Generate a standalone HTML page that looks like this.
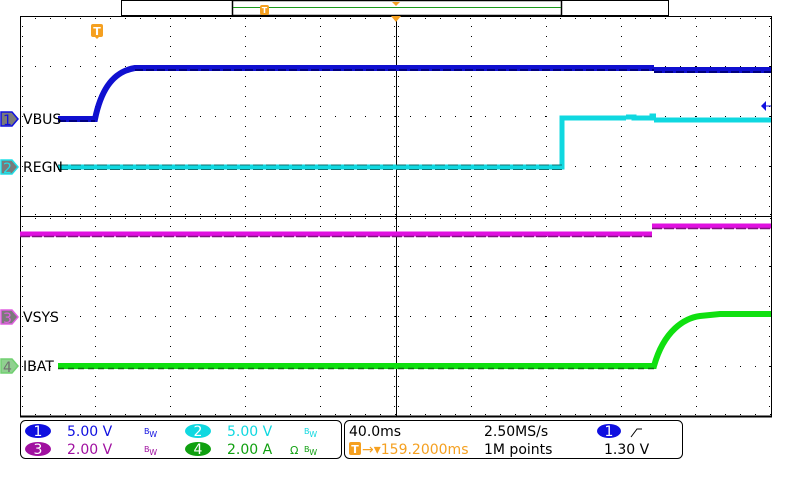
<!DOCTYPE html>
<html><head><style>
body{margin:0;width:800px;height:480px;background:#fff;overflow:hidden}
svg{display:block}
text{font-family:"DejaVu Sans","Liberation Sans",sans-serif}
</style></head><body>
<svg width="800" height="480" viewBox="0 0 800 480" xmlns="http://www.w3.org/2000/svg">
<!-- top bar -->
<rect x="121.5" y="0.5" width="547" height="15" fill="#fff" stroke="#000"/>
<rect x="232.5" y="0.5" width="329" height="15" fill="#fff" stroke="#000" stroke-width="1.5"/>
<line x1="233" y1="7.5" x2="561" y2="7.5" stroke="#1a9a1a"/>
<rect x="260" y="5" width="9" height="10" rx="2" fill="#f5a020"/>
<text x="264.5" y="13" font-size="8" fill="#fff" text-anchor="middle" font-weight="bold">T</text>
<polygon points="392,2 400,2 396,6" fill="#f5a020"/>
<!-- grid frame -->
<rect x="20.5" y="16.5" width="751" height="400" fill="none" stroke="#000"/>
<line x1="20" y1="416.5" x2="772" y2="416.5" stroke="#000" stroke-width="2"/>
<line x1="20" y1="216.5" x2="772" y2="216.5" stroke="#000"/>
<line x1="396.5" y1="16" x2="396.5" y2="416" stroke="#000"/>
<g stroke="#000" stroke-width="1" stroke-dasharray="1 9">
<line x1="95.5" y1="16" x2="95.5" y2="416"/><line x1="170.5" y1="16" x2="170.5" y2="416"/><line x1="245.5" y1="16" x2="245.5" y2="416"/><line x1="320.5" y1="16" x2="320.5" y2="416"/><line x1="471.5" y1="16" x2="471.5" y2="416"/><line x1="546.5" y1="16" x2="546.5" y2="416"/><line x1="621.5" y1="16" x2="621.5" y2="416"/><line x1="696.5" y1="16" x2="696.5" y2="416"/>
</g>
<g stroke="#000" stroke-width="1" stroke-dasharray="1 14">
<line x1="20" y1="66.5" x2="772" y2="66.5"/><line x1="20" y1="116.5" x2="772" y2="116.5"/><line x1="20" y1="166.5" x2="772" y2="166.5"/><line x1="20" y1="266.5" x2="772" y2="266.5"/><line x1="20" y1="316.5" x2="772" y2="316.5"/><line x1="20" y1="366.5" x2="772" y2="366.5"/>
</g>
<g stroke="#000" stroke-dasharray="1 9">
<line x1="22.5" y1="16" x2="22.5" y2="416"/><line x1="769.5" y1="16" x2="769.5" y2="416"/><line x1="394.5" y1="16" x2="394.5" y2="416"/><line x1="398.5" y1="16" x2="398.5" y2="416"/>
</g>
<g stroke="#000" stroke-dasharray="1 14">
<line x1="20" y1="18.5" x2="772" y2="18.5"/><line x1="20" y1="414.5" x2="772" y2="414.5"/><line x1="20" y1="214.5" x2="772" y2="214.5"/><line x1="20" y1="218.5" x2="772" y2="218.5"/>
</g>
<!-- trigger markers -->
<polygon points="391,16 401,16 396,22" fill="#f5a020"/>
<rect x="91" y="24" width="12" height="13" rx="2" fill="#f5a020"/>
<polygon points="95,37 99,37 97,39" fill="#f5a020"/>
<text x="97" y="35" font-size="11" fill="#fff" text-anchor="middle" font-weight="bold">T</text>
<!-- traces -->
<path d="M58,119 H95 C100,95 110,72 135,68 H654 M654,70 H771" fill="none" stroke="#1010d0" stroke-width="6"/>
<path d="M58,121 H95 M135,70 H654 M654,72 H771" fill="none" stroke="#000080" stroke-width="2" stroke-dasharray="8 3"/>
<path d="M58,167 H562 V118 H626 M626,117 H634 V118 H652 V116 H656 M654,120 H771" fill="none" stroke="#10d8e0" stroke-width="5"/>
<path d="M58,165 H562 M58,169.5 H562" fill="none" stroke="#107070" stroke-width="1" stroke-dasharray="10 3"/>
<path d="M20,234 H652 M652,226 H771" fill="none" stroke="#e010e0" stroke-width="5"/>
<path d="M20,236.5 H652 M652,228.5 H771" fill="none" stroke="#801080" stroke-width="1.5" stroke-dasharray="10 2"/>
<path d="M58,366 H654 C664,330 685,318 700,316 L720,314 H771" fill="none" stroke="#10e010" stroke-width="6"/>
<path d="M58,368.5 H654" fill="none" stroke="#107010" stroke-width="1.5" stroke-dasharray="6 4"/>
<polygon points="761,106 766,101 766,111" fill="#1010e0"/><line x1="765" y1="106" x2="771" y2="106" stroke="#1010e0"/>
<!-- channel markers -->
<g font-size="14" font-family="Liberation Sans">
<polygon points="1,112 12,112 18,119 12,126 1,126" fill="#7a7a7a" stroke="#1010e0" stroke-width="1.5"/><text x="3" y="125" fill="#1010e0" font-family="Liberation Sans">1</text>
<polygon points="1,160 12,160 18,167 12,174 1,174" fill="#7a7a7a" stroke="#20e0e8" stroke-width="1.5"/><text x="3" y="173" fill="#20e0e8" font-family="Liberation Sans">2</text>
<polygon points="1,310 12,310 18,317 12,324 1,324" fill="#7a7a7a" stroke="#e060e0" stroke-width="1.5"/><text x="3" y="323" fill="#e060e0" font-family="Liberation Sans">3</text>
<polygon points="1,359 12,359 18,366 12,373 1,373" fill="#90d090" stroke="#70d070" stroke-width="1.5"/><text x="3" y="372" fill="#707070" font-family="Liberation Sans">4</text>
</g>
<g font-size="14" fill="#000">
<text x="23" y="124" font-family="Liberation Sans">VBUS</text><text x="23" y="172" font-family="Liberation Sans">REGN</text><text x="23" y="322" font-family="Liberation Sans">VSYS</text><text x="23" y="371" font-family="Liberation Sans">IBAT</text>
</g>
<!-- bottom panels -->
<rect x="20.5" y="420.5" width="321" height="38" rx="5" fill="none" stroke="#000"/>
<rect x="344.5" y="420.5" width="338" height="38" rx="5" fill="none" stroke="#000"/>
<g font-size="14">
<ellipse cx="38" cy="431" rx="13" ry="7" fill="#1010e0"/><text x="38" y="436" fill="#fff" text-anchor="middle">1</text>
<text x="67" y="436" fill="#1010e0">5.00 V</text><text x="144" y="434" font-size="8" fill="#1010e0">B<tspan dy="3">W</tspan></text>
<ellipse cx="198" cy="431" rx="13" ry="7" fill="#10d8e0"/><text x="198" y="436" fill="#fff" text-anchor="middle">2</text>
<text x="227" y="436" fill="#10d8e0">5.00 V</text><text x="304" y="434" font-size="8" fill="#10d8e0">B<tspan dy="3">W</tspan></text>
<ellipse cx="38" cy="449" rx="13" ry="7" fill="#a010a0"/><text x="38" y="454" fill="#fff" text-anchor="middle">3</text>
<text x="67" y="454" fill="#a010a0">2.00 V</text><text x="144" y="452" font-size="8" fill="#a010a0">B<tspan dy="3">W</tspan></text>
<ellipse cx="198" cy="449" rx="13" ry="7" fill="#10a010"/><text x="198" y="454" fill="#fff" text-anchor="middle">4</text>
<text x="227" y="454" fill="#10a010">2.00 A</text><text x="290" y="454" font-size="11" fill="#10a010">Ω</text><text x="304" y="452" font-size="8" fill="#10a010">B<tspan dy="3">W</tspan></text>
<text x="349" y="436" fill="#000">40.0ms</text>
<rect x="349" y="442" width="12" height="13" rx="2" fill="#f5a020"/><text x="355" y="453" font-size="11" fill="#fff" text-anchor="middle" font-weight="bold">T</text>
<text x="362" y="454" fill="#f5a020">→▾159.2000ms</text>
<text x="484" y="436" fill="#000">2.50MS/s</text>
<text x="484" y="454" fill="#000">1M points</text>
<ellipse cx="609" cy="431" rx="12" ry="7" fill="#1010e0"/><text x="609" y="436" fill="#fff" text-anchor="middle">1</text>
<path d="M631,437 L637,429 H642" fill="none" stroke="#000"/>
<text x="604" y="454" fill="#000">1.30 V</text>
</g>
</svg>
</body></html>
